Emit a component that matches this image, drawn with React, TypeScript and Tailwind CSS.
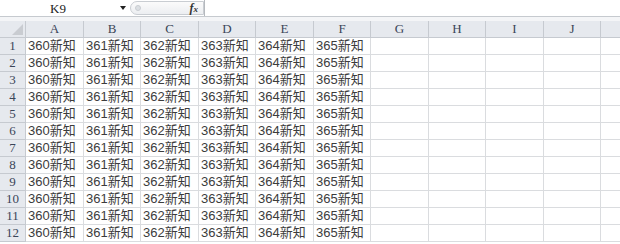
import React from 'react';

const cols = ['A', 'B', 'C', 'D', 'E', 'F', 'G', 'H', 'I', 'J'];
const rows = Array.from({ length: 12 }, (_, i) => i + 1);
const filled = ['360新知', '361新知', '362新知', '363新知', '364新知', '365新知'];

const cellFont = { fontFamily: '"Liberation Sans", "Noto Sans CJK SC", sans-serif' };
const headFont = { fontFamily: '"Liberation Serif", "DejaVu Serif", serif' };

export default function App() {
  return (
    <div className="w-[620px] h-[244px] overflow-hidden bg-white">
      {/* formula bar */}
      <div className="flex h-[17px] border-b border-[#c6cacf] bg-white">
        <div className="relative w-[130px] flex items-center">
          <span className="w-[116px] text-center text-[13px] leading-none text-[#222]" style={headFont}>
            K9
          </span>
          <span className="absolute left-[120px] top-[6px] w-0 h-0 border-l-[3px] border-r-[3px] border-t-[4px] border-l-transparent border-r-transparent border-t-[#222]" />
        </div>
        <div className="mt-[1px] h-[14px] w-[74px] rounded-l-full border border-[#c9cdd2] bg-gradient-to-b from-[#fbfbfb] to-[#eceef1] flex items-center justify-between pl-[4px] pr-[5px]">
          <span className="w-[6px] h-[6px] rounded-full bg-[#dcdfe3] border border-[#c9cdd2]" />
          <span className="italic text-[12px] leading-none text-[#333] font-bold" style={headFont}>
            f<span className="text-[9px]">x</span>
          </span>
        </div>
        <div className="flex-1 border-l border-[#b5b9be] bg-white" />
      </div>
      <div className="h-[4px] bg-[#f4f5f7]" />
      {/* sheet */}
      <div className="grid grid-cols-[26px_58px_57px_58px_57px_58px_57px_58px_57px_58px_57px_1fr] auto-rows-[17px]">
        <div className="relative bg-[#e6e9ee] border-r border-b border-[#c6cad0]">
          <span
            className="absolute right-[2px] bottom-[2px] w-0 h-0"
            style={{ borderBottom: '11px solid #c9ccd1', borderLeft: '11px solid transparent' }}
          />
        </div>
        {cols.map((c) => (
          <div
            key={c}
            className="flex items-center justify-center bg-[#e6e9ee] border-r border-b border-[#c6cad0] text-[13px] text-[#3a4558]"
            style={headFont}
          >
            {c}
          </div>
        ))}
        <div className="bg-[#e6e9ee] border-b border-[#c6cad0]" />
        {rows.map((r) => (
          <React.Fragment key={r}>
            <div
              className="flex items-center justify-center bg-[#e6e9ee] border-r border-b border-[#c6cad0] text-[13px] text-[#3a4558]"
              style={headFont}
            >
              {r}
            </div>
            {cols.map((c, i) => (
              <div
                key={c}
                className="flex items-center pl-[2px] border-r border-b border-[#dadcdf] text-[13px] text-[#3c3c3c] whitespace-nowrap overflow-hidden"
                style={cellFont}
              >
                {filled[i] ?? ''}
              </div>
            ))}
            <div className="border-b border-[#dadcdf]" />
          </React.Fragment>
        ))}
      </div>
    </div>
  );
}
